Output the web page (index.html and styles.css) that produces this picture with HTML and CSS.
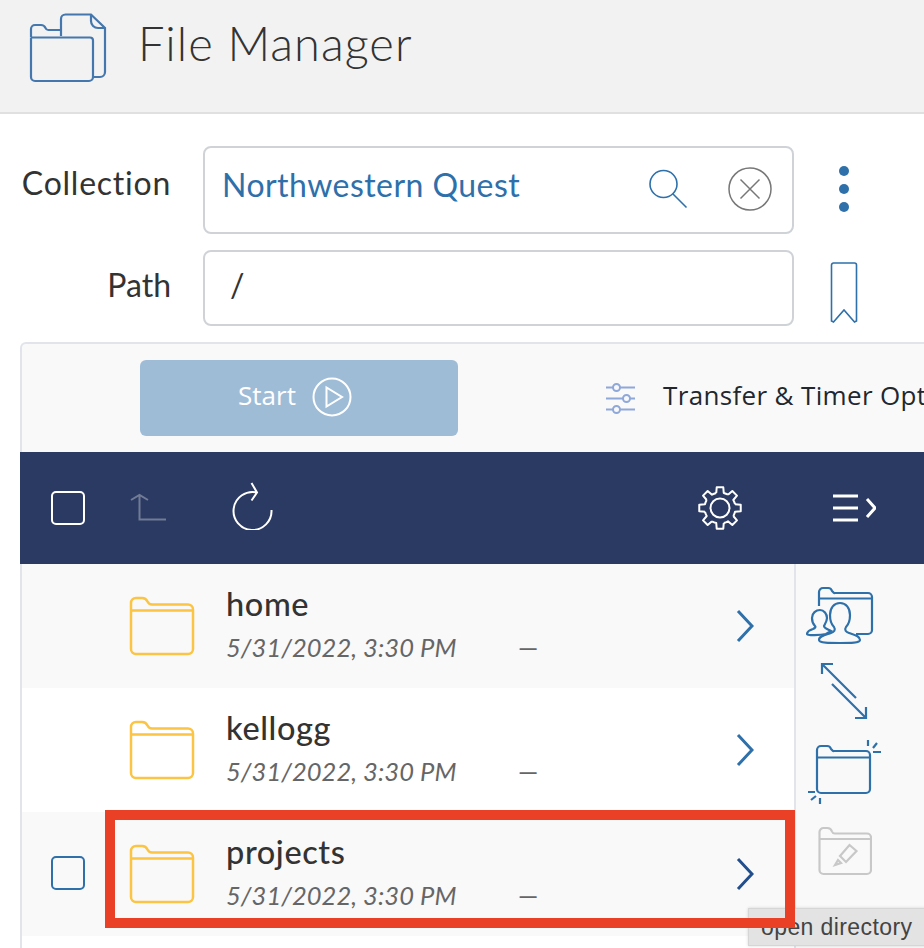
FILE: index.html
```html
<!DOCTYPE html>
<html lang="en">
<head>
<meta charset="utf-8">
<title>File Manager</title>
<link rel="stylesheet" href="styles.css">
</head>
<body>
<header class="page-header">
  <svg class="header-icon" width="80" height="72" viewBox="0 0 80 72">
    <path d="M33 24V7a4.500 4.500 0 0 1 4.500-4.500H63L77 16V60a5 5 0 0 1-5 5H65" class="hi"/>
    <path d="M63 2.500V9a7 7 0 0 0 7 7h7" class="hi"/>
    <path d="M3 25V17a4 4 0 0 1 4-4h6a5 5 0 0 1 4.500 3 3 3 0 0 0 3 2H33" class="hi"/>
    <path d="M3 25.500H62a3 3 0 0 1 3 3V65a4 4 0 0 1-4 4H7a4 4 0 0 1-4-4V25.500" class="hi"/>
  </svg>
  <h1 class="page-title">File Manager</h1>
</header>

<main class="content">
  <div class="form-row form-row-collection">
    <label class="form-label label-collection">Collection</label>
    <div class="field field-collection">
      <span class="field-text">Northwestern Quest</span>
      <svg class="search-icon" width="42" height="42" viewBox="0 0 42 42">
        <circle cx="16.500" cy="16" r="13.500" class="blue-line"/>
        <path d="M26 26l13.500 13.500" class="blue-line"/>
      </svg>
      <svg class="clear-icon" width="44" height="44" viewBox="0 0 44 44">
        <circle cx="22" cy="22" r="21" class="grey-line"/>
        <path d="M12.500 12.500l19 19M31.500 12.500l-19 19" class="grey-line"/>
      </svg>
    </div>
    <div class="form-side">
      <div class="kebab"><i></i><i></i><i></i></div>
    </div>
  </div>

  <div class="form-row form-row-path">
    <label class="form-label">Path</label>
    <div class="field field-path"><span class="field-path-text">/</span></div>
    <div class="form-side">
      <svg class="bookmark" width="28" height="62" viewBox="0 0 28 62">
        <path d="M1.500 3a2 2 0 0 1 2-2h21a2 2 0 0 1 2 2v56l-2 1L14 48 3.500 60l-2-1z" class="blue-line"/>
      </svg>
    </div>
  </div>

  <section class="panel">
    <div class="panel-toolbar">
      <button class="start-btn" type="button">
        <span class="start-label">Start</span>
        <svg width="40" height="40" viewBox="0 0 40 40">
          <circle cx="20" cy="20" r="18.500" class="white-line"/>
          <path d="M14.500 10.500v19L30 20z" class="white-line"/>
        </svg>
      </button>
      <svg class="options-icon" width="30" height="32" viewBox="0 0 30 32">
        <g class="option-lines">
          <path d="M1 5.500h7M15 5.500h15M1 16.500h17M25 16.500h5M1 27.500h7M15 27.500h15"/>
          <circle cx="11.500" cy="5.500" r="3.500"/>
          <circle cx="21.500" cy="16.500" r="3.500"/>
          <circle cx="11.500" cy="27.500" r="3.500"/>
        </g>
      </svg>
      <span class="options-text">Transfer &amp; Timer Options</span>
    </div>

    <div class="nav-bar">
      <span class="check check-light"></span>
      <svg class="nav-up" width="36" height="28" viewBox="0 0 36 28">
        <path d="M1 7l8.500-5L18 7M9.500 2v24.500H36" class="dim-line"/>
      </svg>
      <svg class="nav-refresh" width="42" height="48" viewBox="0 0 42 48">
        <path d="M26 10.500A19 19 0 1 0 40.500 28M20.500 1l5.500 9.500-5.500 8" class="white-thin"/>
      </svg>
      <span class="nav-spacer"></span>
      <svg class="nav-gear" width="44" height="44" viewBox="0 0 44 44">
        <defs>
          <path id="gear-tooth" d="M18.250 6.960L18.710 1.260H25.290L25.750 6.960A15.500 15.500 0 0 1 29.980 8.710"/>
        </defs>
        <circle cx="22" cy="22" r="9.500" class="white-thin"/>
        <g class="white-thin gear-shape">
          <use href="#gear-tooth"/>
          <use href="#gear-tooth" transform="rotate(45 22 22)"/>
          <use href="#gear-tooth" transform="rotate(90 22 22)"/>
          <use href="#gear-tooth" transform="rotate(135 22 22)"/>
          <use href="#gear-tooth" transform="rotate(180 22 22)"/>
          <use href="#gear-tooth" transform="rotate(225 22 22)"/>
          <use href="#gear-tooth" transform="rotate(270 22 22)"/>
          <use href="#gear-tooth" transform="rotate(315 22 22)"/>
        </g>
      </svg>
      <svg class="nav-menu" width="44" height="28" viewBox="0 0 44 28">
        <path d="M1 2h25M1 14h25M1 26h25M35 5l8 9-8 9" class="white-bold"/>
      </svg>
    </div>

    <div class="browser">
      <div class="rows">
        <div class="row row-shaded">
          <span class="row-check"></span>
          <svg class="folder" width="66" height="60" viewBox="0 0 66 60"><path d="M2 12V7a5 5 0 0 1 5-5h6a6 6 0 0 1 5.500 3.500A5 5 0 0 0 23 8.500h36a5 5 0 0 1 5 5V53a5 5 0 0 1-5 5H7a5 5 0 0 1-5-5V12M2 14.500h62"/></svg>
          <div class="row-info">
            <div class="row-name">home</div>
            <div class="row-meta"><span class="row-date">5/31/2022, 3:30 PM</span><span class="row-size">—</span></div>
          </div>
          <svg class="chevron" width="18" height="34" viewBox="0 0 18 34"><path d="M2 2l14 15L2 32"/></svg>
        </div>
        <div class="row">
          <span class="row-check"></span>
          <svg class="folder" width="66" height="60" viewBox="0 0 66 60"><path d="M2 12V7a5 5 0 0 1 5-5h6a6 6 0 0 1 5.500 3.500A5 5 0 0 0 23 8.500h36a5 5 0 0 1 5 5V53a5 5 0 0 1-5 5H7a5 5 0 0 1-5-5V12M2 14.500h62"/></svg>
          <div class="row-info">
            <div class="row-name">kellogg</div>
            <div class="row-meta"><span class="row-date">5/31/2022, 3:30 PM</span><span class="row-size">—</span></div>
          </div>
          <svg class="chevron" width="18" height="34" viewBox="0 0 18 34"><path d="M2 2l14 15L2 32"/></svg>
        </div>
        <div class="row row-shaded">
          <span class="row-check"><span class="check check-blue"></span></span>
          <svg class="folder" width="66" height="60" viewBox="0 0 66 60"><path d="M2 12V7a5 5 0 0 1 5-5h6a6 6 0 0 1 5.500 3.500A5 5 0 0 0 23 8.500h36a5 5 0 0 1 5 5V53a5 5 0 0 1-5 5H7a5 5 0 0 1-5-5V12M2 14.500h62"/></svg>
          <div class="row-info">
            <div class="row-name">projects</div>
            <div class="row-meta"><span class="row-date">5/31/2022, 3:30 PM</span><span class="row-size">—</span></div>
          </div>
          <svg class="chevron chevron-dark" width="18" height="34" viewBox="0 0 18 34"><path d="M2 2l14 15L2 32"/></svg>
        </div>
      </div>

      <aside class="side-tools">
        <svg class="tool tool-shared" width="68" height="60" viewBox="0 0 68 60">
          <path d="M13 20V6a4 4 0 0 1 4-4h5a4 4 0 0 1 4 3l1 1a2 2 0 0 0 2 1H62a4 4 0 0 1 4 4V44a4 4 0 0 1-4 4H50M13 12.500h53" class="tool-line"/>
          <path d="M14 24c4 0 7 4 7 8 0 3-2 6-3 8 0 2 3 3 7 5l-5 3c-5 1-19 2-19 0 0-3 3-4 6-5 2-1 3-2 2-3-2-2-3-5-3-8 0-5 4-8 8-8z" class="tool-line tool-fill"/>
          <path d="M13 54c0-4 6-5 12-7 3-1 5-3 3-6-3-3-4-7-4-12 0-7 4-12 10-12s10 5 10 12c0 5-1 9-4 12-2 3 0 5 3 6 6 2 11 3 11 7 0 3-10 3-20 3s-21 0-21-3z" class="tool-line tool-fill"/>
        </svg>
        <svg class="tool tool-move" width="48" height="58" viewBox="0 0 48 58">
          <path d="M2 2l34 34M2 12V2h11M12 22l34 34M46 45v11H35" class="tool-line"/>
        </svg>
        <svg class="tool tool-new" width="74" height="64" viewBox="0 0 74 64">
          <path d="M9 17V10a4 4 0 0 1 4-4h6a4 4 0 0 1 4 3l1 1a2 2 0 0 0 2 1H58a4 4 0 0 1 4 4V49a4 4 0 0 1-4 4H13a4 4 0 0 1-4-4V17zM9 17.500h53" class="tool-line"/>
          <path d="M60 0v6M65 8l4-5M65 12h8M0 52h7M3 60l5-4M12 58v6" class="tool-line"/>
        </svg>
        <svg class="tool tool-rename" width="54" height="50" viewBox="0 0 54 50">
          <path d="M1.500 13V6a4 4 0 0 1 4-4H9a5 5 0 0 1 5 3.500 3 3 0 0 0 3 2H49a4 4 0 0 1 4 4V44a4 4 0 0 1-4 4H5.500a4 4 0 0 1-4-4zM1.500 13h51" class="tool-grey"/>
          <path d="M22 30l9.500-11 7 6L28 36zM17 39l3-5 3 3z" class="tool-grey"/>
        </svg>
      </aside>
    </div>
  </section>
</main>

<div class="tooltip">open directory</div>
<div class="highlight"></div>
</body>
</html>
```

FILE: styles.css
```css
* { box-sizing: border-box; }

html, body {
  margin: 0;
  height: 948px;
  overflow: hidden;
  background: #fff;
  font-family: Lato, "Liberation Sans", sans-serif;
  color: #333;
}

.page-header {
  height: 114px;
  background: #f2f2f2;
  border-bottom: 2px solid #e0e0e0;
  display: flex;
  align-items: flex-start;
  padding: 12px 0 0 28px;
}
.header-icon { flex: none; }
.hi { fill: none; stroke: #4377ad; stroke-width: 2.200; }
.page-title {
  margin: 3px 0 0 30px;
  font-size: 47px;
  font-weight: 300;
  line-height: 56px;
  color: #333;
  letter-spacing: 1px;
}

.content { padding-left: 20px; }

.form-row { display: flex; align-items: flex-start; }
.form-row-collection { padding-top: 32px; height: 136px; }
.form-row-path { height: 92px; }
.form-label {
  width: 151px;
  text-align: right;
  font-size: 32px;
  line-height: 40px;
  flex: none;
}
.label-collection { letter-spacing: .75px; }
.form-row-collection .form-label { padding-top: 17px; }
.form-row-path .form-label { padding-top: 15px; }

.field {
  margin-left: 32px;
  width: 591px;
  background: #fff;
  border: 2px solid #cfd3d8;
  border-radius: 8px;
  display: flex;
  flex: none;
}
.field-collection { height: 88px; align-items: flex-start; padding: 0 20px 0 17px; }
.field-text {
  color: #2e70aa;
  font-size: 32px;
  line-height: 40px;
  letter-spacing: .45px;
  margin-top: 17px;
  flex: 1;
}
.search-icon { margin: 20px -1px 0 1px; flex: none; }
.clear-icon { margin: 19px 0 0 40px; flex: none; }
.blue-line { fill: none; stroke: #2e70aa; stroke-width: 1.600; }
.grey-line { fill: none; stroke: #777; stroke-width: 1.500; }

.field-path { height: 76px; padding: 13px 0 0 25px; }
.field-path-text { font-size: 32px; line-height: 40px; }

.form-side { width: 100px; display: flex; justify-content: center; }
.kebab { display: flex; flex-direction: column; gap: 8px; padding-top: 20px; }
.kebab i { width: 10px; height: 10px; border-radius: 50%; background: #2e70aa; display: block; }
.bookmark { margin-top: 12px; margin-left: -1px; }

.panel {
  width: 904px;
  background: #f9f9f9;
  border-top: 2px solid #e1e4ea;
  border-left: 2px solid #e1e4ea;
  border-top-left-radius: 6px;
}
.panel-toolbar {
  height: 108px;
  display: flex;
  align-items: flex-start;
  padding: 16px 0 0 118px;
  white-space: nowrap;
}
.start-btn {
  width: 318px;
  height: 76px;
  background: #9fbcd7;
  color: #fff;
  border: 0;
  border-radius: 6px;
  font: 400 26px/40px "Open Sans", sans-serif;
  display: flex;
  align-items: center;
  justify-content: center;
  gap: 16px;
  flex: none;
  padding: 0 8px 2px 0;
}
.start-label { margin-top: -5px; }
.white-line { fill: none; stroke: #fff; stroke-width: 2; }
.options-icon { margin: 22px 0 0 147px; flex: none; }
.option-lines { fill: none; stroke: #8fa8da; stroke-width: 2; }
.options-text {
  margin: 15px 0 0 28px;
  font-family: "Open Sans", sans-serif;
  font-size: 26px;
  line-height: 40px;
  letter-spacing: .35px;
  color: #22272e;
}

.nav-bar {
  margin-left: -2px;
  height: 112px;
  background: #2b3a63;
  display: flex;
  align-items: flex-start;
  padding-left: 31px;
}
.check { display: block; width: 34px; height: 34px; border-radius: 5px; }
.check-light { border: 2px solid #fff; margin-top: 39px; flex: none; }
.check-blue { border: 2px solid #2e70aa; }
.nav-up { margin: 41px 0 0 45px; flex: none; }
.dim-line { fill: none; stroke: #727b96; stroke-width: 2; }
.nav-refresh { margin: 30px 0 0 65px; flex: none; }
.white-thin { fill: none; stroke: #fff; stroke-width: 2; }
.gear-shape { stroke-linejoin: round; }
.nav-spacer { flex: 1; }
.nav-gear { margin: 34px 0 0; flex: none; }
.nav-menu { margin: 42px 48px 0 90px; flex: none; }
.white-bold { fill: none; stroke: #fff; stroke-width: 3; }

.browser { display: flex; height: 400px; background: #fff; }
.rows { width: 774px; flex: none; border-right: 2px solid #e1e4ea; }
.row {
  height: 124px;
  display: flex;
  align-items: flex-start;
  background: #fff;
}
.row-shaded { background: #f9f9f9; }
.row-check { width: 107px; padding: 44px 0 0 29px; flex: none; }
.folder { margin-top: 32px; flex: none; fill: none; }
.folder path { fill: none; stroke: #fbc443; stroke-width: 2.500; }
.row-info { margin-left: 31px; padding-top: 19px; flex: 1; }
.row-name { font-size: 32.500px; line-height: 42px; font-weight: 500; color: #333; letter-spacing: .6px; }
.row-meta { display: flex; font-size: 25.500px; line-height: 34px; color: #666; margin-top: 5px; }
.row-date { font-style: italic; width: 292px; letter-spacing: .05px; }
.row-size { font-style: normal; }
.chevron { margin: 45px 40px 0 0; flex: none; }
.chevron path { fill: none; stroke: #2e70aa; stroke-width: 3; }
.chevron-dark path { stroke: #214f8d; }

.side-tools {
  flex: 1;
  background: #f9f9f9;
  display: flex;
  flex-direction: column;
  align-items: flex-start;
  padding: 22px 0 0 10px;
}
.tool { flex: none; display: block; }
.tool-move { margin: 16px 0 0 14px; }
.tool-new { margin: 20px 0 0 2px; }
.tool-rename { margin: 22px 0 0 12px; }
.tool-line { fill: none; stroke: #2e70aa; stroke-width: 2.200; }
.tool-fill { fill: #f9f9f9; }
.tool-grey { fill: none; stroke: #c8c8c8; stroke-width: 2.200; }

.tooltip {
  position: absolute;
  left: 748px;
  top: 908px;
  width: 190px;
  height: 38px;
  background: #e3e3e3;
  border: 1px solid #d6d6d6;
  box-shadow: 0 0 3px rgba(0,0,0,.15);
  padding: 4px 0 0 12px;
  font-family: "Liberation Sans", sans-serif;
  font-size: 23px;
  line-height: 28px;
  letter-spacing: .4px;
  color: #444;
}
.highlight {
  position: absolute;
  left: 105px;
  top: 810px;
  width: 690px;
  height: 118px;
  border: 10px solid #ea4025;
}
```
